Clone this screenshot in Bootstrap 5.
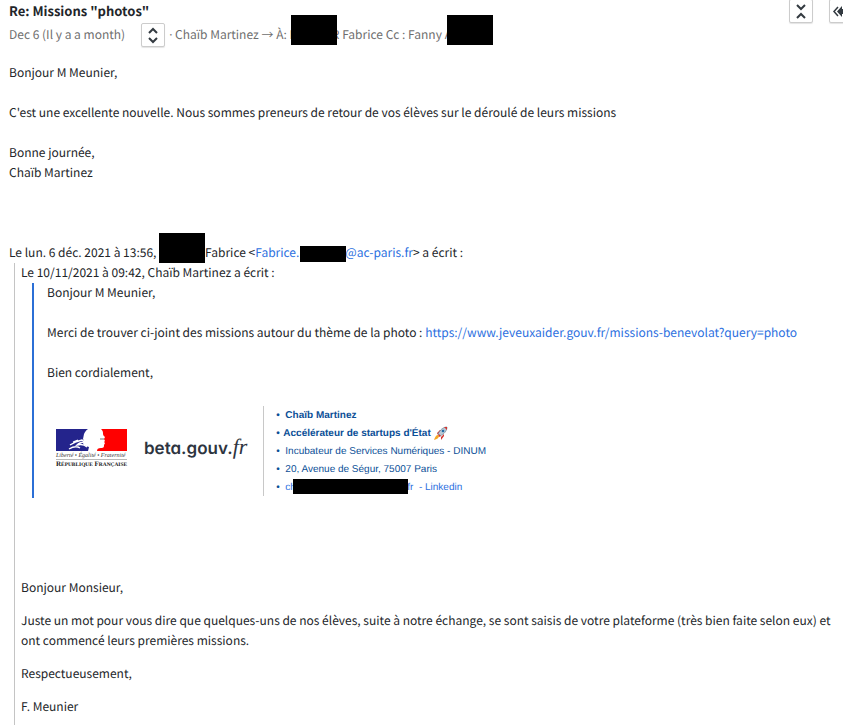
<!DOCTYPE html>
<html lang="fr">
<head>
<meta charset="utf-8">
<meta name="viewport" content="width=device-width, initial-scale=1">
<title>Re: Missions "photos"</title>
<link href="https://cdn.jsdelivr.net/npm/bootstrap@5.3.0/dist/css/bootstrap.min.css" rel="stylesheet">
<style>
body { font-family: "Noto Sans CJK SC", "Noto Sans", sans-serif; font-size: 12px; line-height: 20px; color: #222529; overflow-x: hidden; text-rendering: geometricPrecision; }
a { color: #2b6fe0; text-decoration: none; }
.message { padding-left: 9px; }
.subject { font-size: 13px; line-height: 22px; }
.meta { color: #6e6e6e; height: 26px; }
.dot { font-family: "Noto Sans", sans-serif; }
.tool { width: 24px; height: 24px; padding: 0; border: 1px solid #ccc; border-radius: 2px; background: #fff; color: #333a40; box-shadow: 0 1px 1px #e4e4e4; }
.tools { gap: 16px; margin-right: -10px; margin-top: -1px; }
.masked { position: relative; display: inline-flex; justify-content: space-between; width: 46px; height: 20px; vertical-align: top; }
.bar { position: absolute; background: #000; height: 30px; width: 46px; bottom: 0; left: 0; }
.masked-wide { width: 50px; }
.masked-wide .bar { left: 2px; }
.masked-mail { width: 128px; height: 18px; }
.bar-line { height: 16px; bottom: 1px; left: 1px; }
.bar-long { width: 115px; height: 15px; bottom: 2px; left: 8px; }
.body-text { padding-top: 15px; }
.body-text p { margin: 0 0 20px; }
.quote { margin-left: 5px; padding: 0 0 8px 6px; border-left: 1px solid #c4c4c4; }
.quote-inner { margin-left: 11px; padding: 0 0 2px 13px; border-left: 2px solid #2b6fd6; }
.body-text .reply p { margin: 0 0 13px; }
.reply { padding: 80px 0 0; }
.signature { padding-top: 3px; color: #0b4f97; font-family: "Liberation Sans", Arial, sans-serif; font-size: 10px; line-height: 20px; }
.logos { padding-bottom: 6px; }
.brand { font-family: Inter, sans-serif; font-feature-settings: "cv11"; font-weight: 600; font-size: 17px; color: #2d3440; }
.brand i { font-family: "Liberation Serif", serif; font-weight: 400; font-size: 22px; }
.contact { border-left: 1px solid #c8c8c8; padding-left: 12px; }
.contact li { height: 18px; }
.contact li::before { content: "•"; display: inline-block; width: 9px; }
.contact li.tight::before { width: 7px; }
</style>
<script src="https://cdn.jsdelivr.net/npm/bootstrap@5.3.0/dist/js/bootstrap.bundle.min.js"></script>
</head>
<body class="bg-white">
<main class="message">
  <header class="d-flex justify-content-between">
    <div>
      <h1 class="subject fw-bold mb-0">Re: Missions "photos"</h1>
      <div class="meta d-flex align-items-center text-nowrap">
        <span>Dec 6 (Il y a a month)</span>
        <button class="tool ms-3 me-1" type="button" aria-label="Afficher les détails"><svg class="d-block mx-auto" width="22" height="22" viewBox="0 0 22 22" fill="none" stroke="currentColor" stroke-width="2"><path d="M7 9l4-4 4 4M7 14l4 4 4-4"/></svg></button>
        <span><span class="dot">·</span> Chaïb Martinez → À: <span class="masked masked-wide"><span>M</span><span>R</span><span class="bar"></span></span> Fabrice Cc : Fanny <span class="masked masked-wide"><span>A</span><span class="bar"></span></span></span>
      </div>
    </div>
    <div class="tools d-flex flex-shrink-0">
      <button class="tool" type="button" aria-label="Réduire"><svg class="d-block mx-auto" width="22" height="22" viewBox="0 0 22 22" fill="none" stroke="currentColor" stroke-width="2"><path d="M7 5l4 4 4-4M7 18l4-4 4 4"/></svg></button>
      <button class="tool" type="button" aria-label="Répondre à tous"><svg class="d-block mx-auto" width="22" height="22" viewBox="0 0 22 22"><path d="M8 7l-4 4.500 4 4.500" fill="none" stroke="currentColor" stroke-width="1.500"/><path d="M12 6v3h6v5h-6v3l-5-5.500z" fill="currentColor"/></svg></button>
    </div>
  </header>
  <article class="body-text">
    <p>Bonjour M Meunier,</p>
    <p>C'est une excellente nouvelle. Nous sommes preneurs de retour de vos élèves sur le déroulé de leurs missions</p>
    <div>Bonne journée,<br>Chaïb Martinez<br><br><br><br></div>
    <div>Le lun. 6 déc. 2021 à 13:56, <span class="masked"><span class="bar"></span></span>Fabrice &lt;<a href="#">Fabrice.<span class="masked"><span>M</span><span class="bar bar-line"></span></span>@ac-paris.fr</a>&gt; a écrit :</div>
    <div class="quote">
      <div>Le 10/11/2021 à 09:42, Chaïb Martinez a écrit :</div>
      <div class="quote-inner">
        <p>Bonjour M Meunier,</p>
        <p>Merci de trouver ci-joint des missions autour du thème de la photo : <a href="#">https://www.jeveuxaider.gouv.fr/missions-benevolat?query=photo</a></p>
        <p>Bien cordialement,</p>
        <div class="signature d-flex align-items-center">
          <div class="logos d-flex align-items-center">
          <svg class="ms-2 me-3" width="73" height="40" viewBox="0 0 73 40" role="img" aria-label="République Française">
            <path d="M1 1h32c-2 1-3 3-4 5l-1 5 1 2-1 3c2 2 4 2 6 3l-1 4H1z" fill="#24248c"/>
            <path d="M46 1h26v22H42c0-2 1-3 4-3 3 0 3-1 3-3l1-2-1-1 1-1-1-2 1-2c-2-1-2-3-2-4 0-2-1-3-2-4z" fill="#f00"/>
            <path d="M15 17c4-3 7-4 12-5l3 2c-4 0-6 1-8 3 4-1 7-1 10 2M14 21c5-3 8-3 11-1M18 14l5-2" fill="none" stroke="#fff" stroke-width="1.300"/>
            <path d="M45 11h4" stroke="#777"/>
            <text x="1" y="29" font-family="Liberation Serif, serif" font-style="italic" font-size="6" fill="#333">Liberté • Égalité • Fraternité</text>
            <path d="M1 31.500h71" stroke="#888" stroke-width=".6"/>
            <text x="1" y="38" font-family="Liberation Serif, serif" font-weight="700" font-size="7" fill="#111">R<tspan font-size="5.400">ÉPUBLIQUE</tspan> F<tspan font-size="5.400">RANÇAISE</tspan></text>
          </svg>
          <div class="brand">beta.gouv.<i>fr</i></div>
          </div>
          <ul class="contact list-unstyled mb-0 ms-3 text-nowrap">
            <li class="fw-bold">Chaïb Martinez</li>
            <li class="fw-bold tight">Accélérateur de startups d'État <svg width="14" height="14" viewBox="0 0 14 14" role="img" aria-label="fusée"><path d="M3 7l3-3 2 0-4 5zM7 11l3-3 0 2-3 4z" fill="#d3342e"/><path d="M4 8c2-4 5-7 9-7 0 4-3 7-7 9z" fill="#b8c9d6" stroke="#62798a" stroke-width=".6"/><path d="M10 1l3 0 0 3c-1-1-2-2-3-3z" fill="#d3342e"/><circle cx="9" cy="5" r="1.300" fill="#246da5"/><path d="M5 8l2 2-2 1-1-1z" fill="#d3342e"/><path d="M4 9c-2 0-3 2-4 5 3-1 5-2 5-4z" fill="#f5a623"/></svg></li>
            <li>Incubateur de Services Numériques - DINUM</li>
            <li>20, Avenue de Ségur, 75007 Paris</li>
            <li><a href="#"><span class="masked masked-mail"><span>ch</span><span>fr</span><span class="bar bar-long"></span></span></a>&nbsp; <a href="#">- Linkedin</a></li>
          </ul>
        </div>
      </div>
      <div class="reply">
        <p>Bonjour Monsieur,</p>
        <p>Juste un mot pour vous dire que quelques-uns de nos élèves, suite à notre échange, se sont saisis de votre plateforme (très bien faite selon eux) et ont commencé leurs premières missions.</p>
        <p>Respectueusement,</p>
        <p>F. Meunier</p>
      </div>
    </div>
  </article>
</main>
</body>
</html>
